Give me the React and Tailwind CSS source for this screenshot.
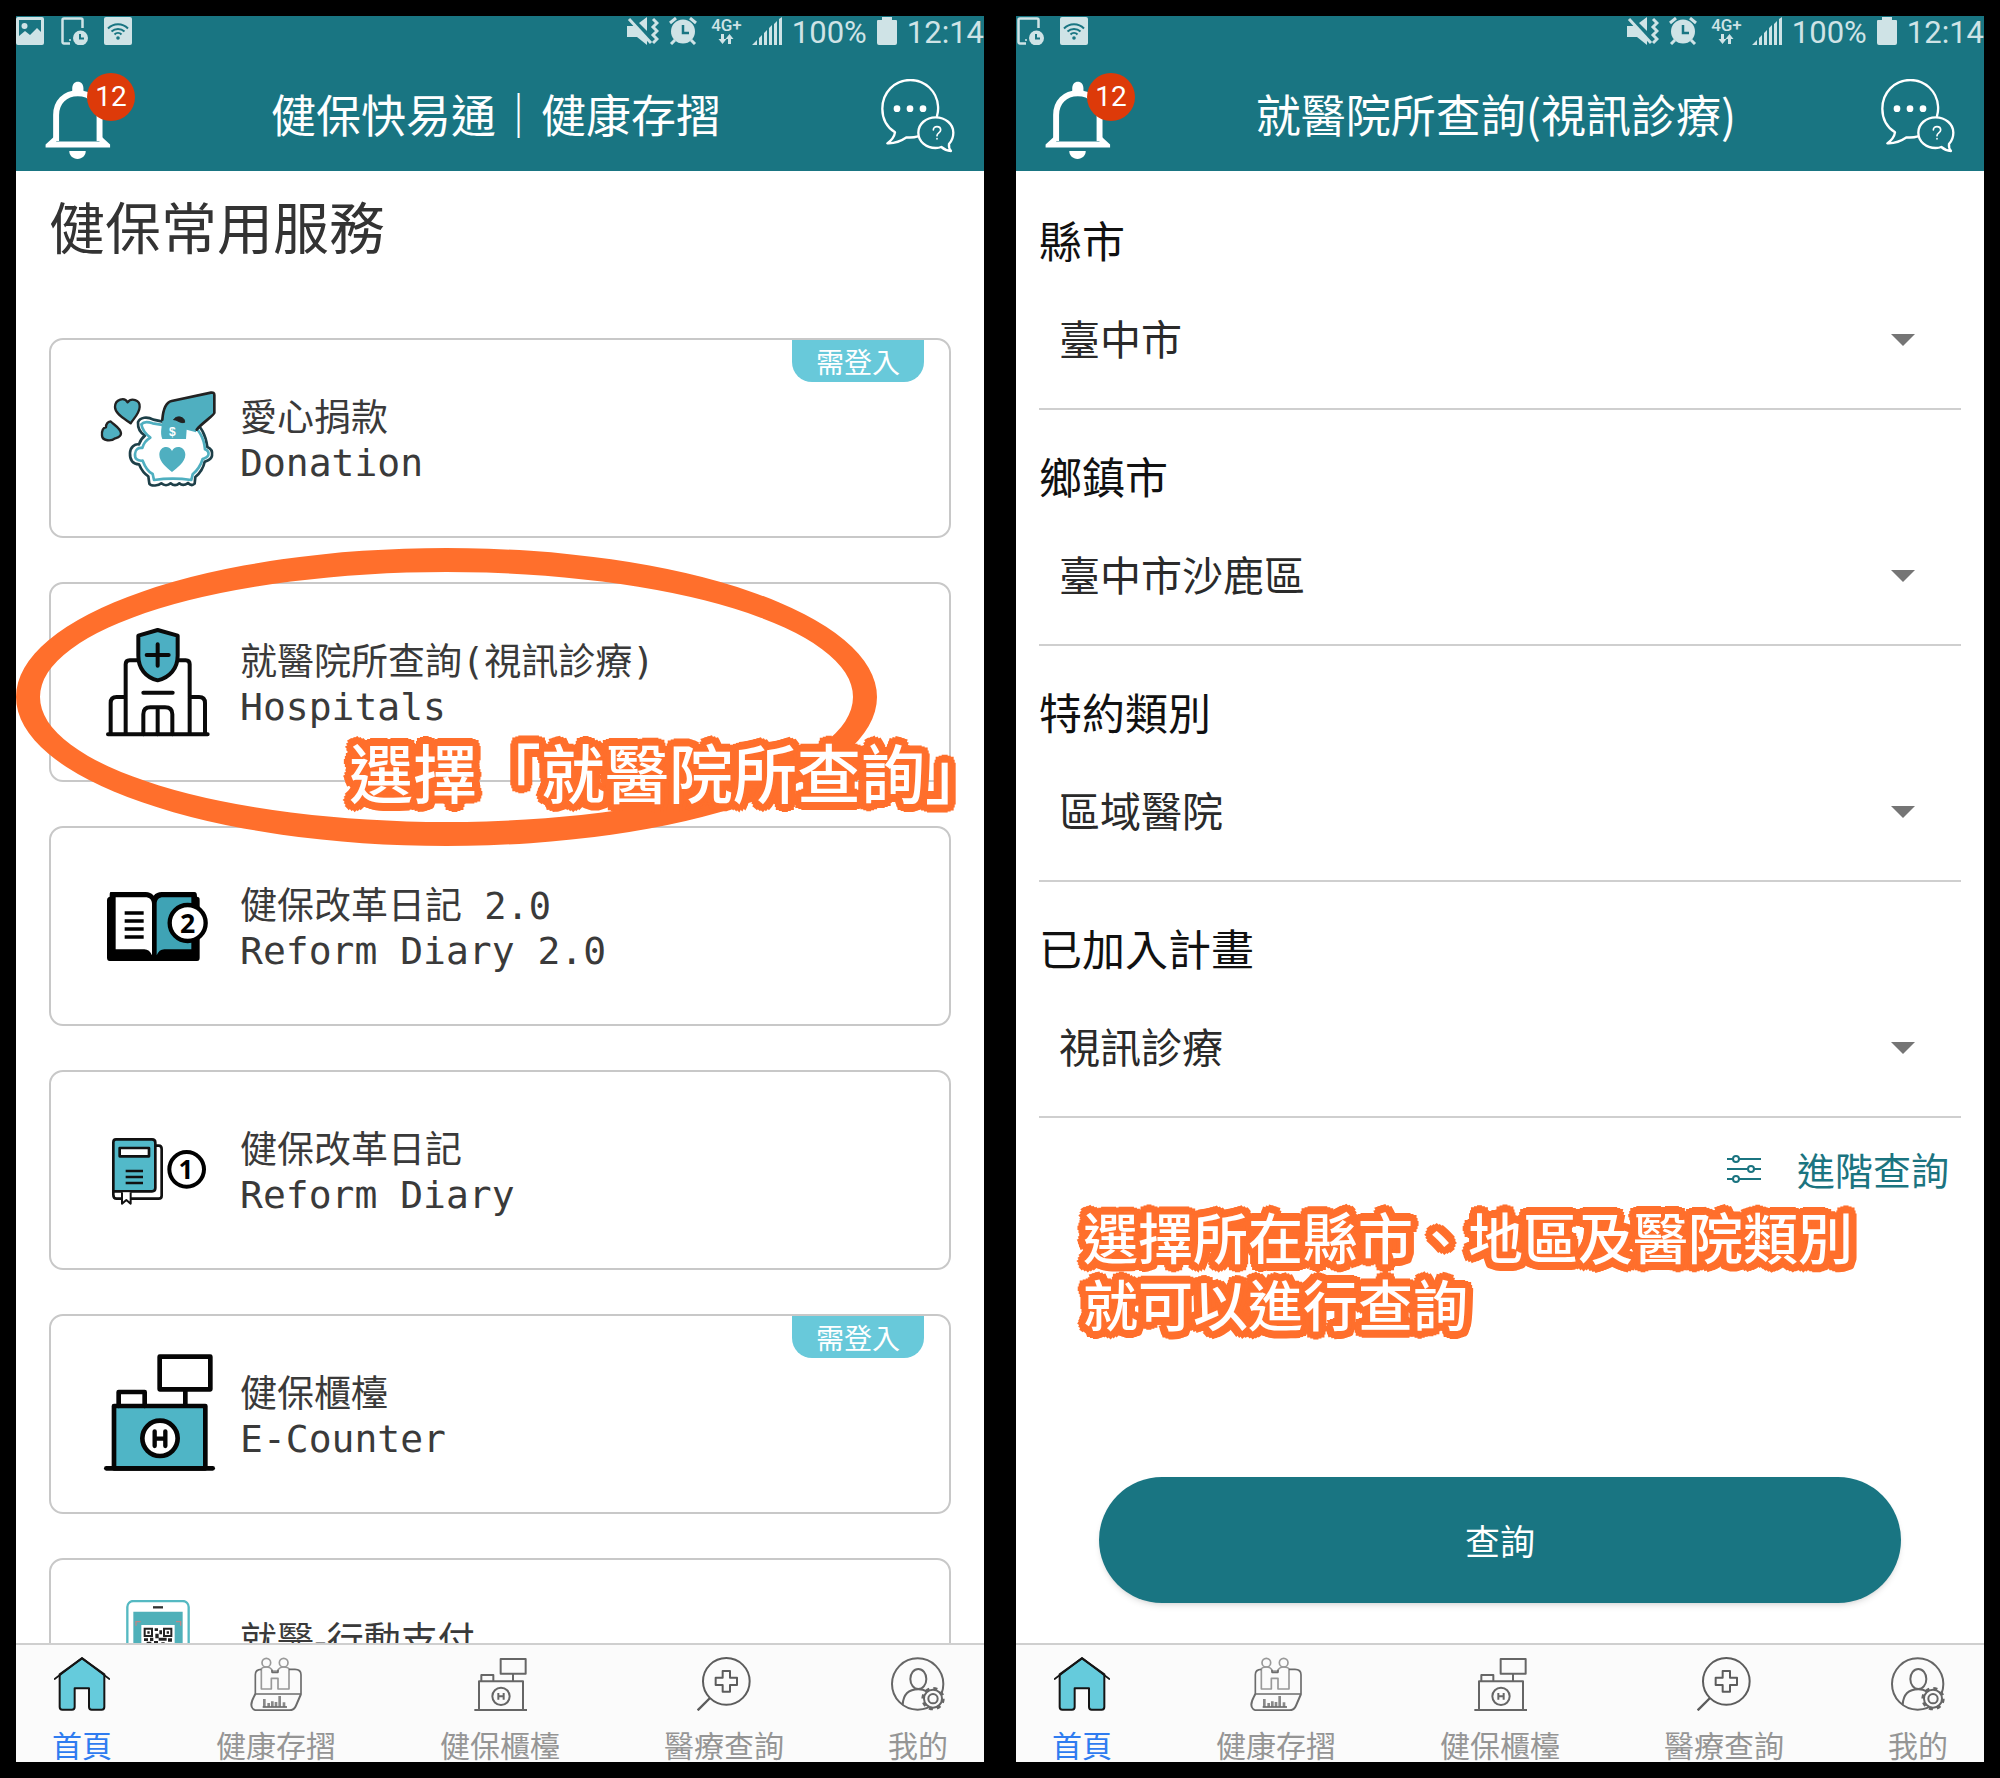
import React from 'react';

const CJK = "font-['Noto_Sans_CJK_TC',sans-serif]";

/* ---------- status bar icons ---------- */

const ImageIcon = () => (
  <svg viewBox="0 0 28 28" className="size-7" fill="#cfe3e6">
    <path fillRule="evenodd" d="M2 0h24a2 2 0 0 1 2 2v24a2 2 0 0 1-2 2H2a2 2 0 0 1-2-2V2a2 2 0 0 1 2-2Zm1 3v16l6-5 5 4 7-7 4 4V3H3Z" />
    <circle cx="8.5" cy="9" r="3" />
  </svg>
);

const PhoneClockIcon = () => (
  <svg viewBox="0 0 28 28" className="size-7" fill="none">
    <path d="M10 26.500H4a1.500 1.500 0 0 1-1.500-1.500V3A1.500 1.500 0 0 1 4 1.500h17A1.500 1.500 0 0 1 22.500 3v8" stroke="#cfe3e6" strokeWidth="2.500" />
    <circle cx="20.500" cy="21" r="7.500" fill="#cfe3e6" />
    <path d="M20 17v4.500h4" stroke="#197582" strokeWidth="2" />
    <circle cx="10" cy="23" r="1" fill="#cfe3e6" />
  </svg>
);

const WifiIcon = () => (
  <svg viewBox="0 0 28 28" className="size-7" fill="none" stroke="#197582" strokeWidth="2">
    <rect width="28" height="28" rx="2" fill="#cfe3e6" stroke="none" />
    <path d="M4 11.500a14 14 0 0 1 20 0M7.500 14.500a9.500 9.500 0 0 1 13 0M10.500 17.500a5 5 0 0 1 7 0" />
    <circle cx="14" cy="21" r="1.800" fill="#197582" stroke="none" />
  </svg>
);

const MuteVibrateIcon = () => (
  <svg viewBox="0 0 32 28" className="h-7 w-8" fill="#cfe3e6">
    <path d="M0 9h7l13 12v7l-10-8H0V9ZM12 6l8-6v14L12 6Z" />
    <path d="M2 2l22 24" stroke="#cfe3e6" strokeWidth="3" />
    <path d="M26 2l4 4-4 4 4 4-4 4 4 4-4 4" fill="none" stroke="#cfe3e6" strokeWidth="3" />
  </svg>
);

const AlarmIcon = () => (
  <svg viewBox="0 0 28 28" className="size-7" fill="none" stroke="#cfe3e6" strokeWidth="3">
    <circle cx="14" cy="14.500" r="12" fill="#cfe3e6" stroke="none" />
    <path d="M1 6l6-5M27 6l-6-5M6 23l-4 4M22 23l4 4" />
    <path d="M14 8v8h6" stroke="#197582" strokeWidth="2.500" />
  </svg>
);

const SignalIcon = () => (
  <svg viewBox="0 0 30 28" className="h-7 w-[30px]" fill="#cfe3e6">
    <path d="M0 28l5-5v5H0ZM7 21l3-3v10H7ZM12 16l3-3v15h-3ZM17 11l3-3v20h-3ZM22 7l3-3v24h-3ZM27 2l3-2v28H27Z" />
  </svg>
);

const BatteryIcon = () => (
  <svg viewBox="0 0 20 28" className="h-7 w-5" fill="#cfe3e6">
    <path d="M5 0h10v3h4a1 1 0 0 1 1 1v22a2 2 0 0 1-2 2H2a2 2 0 0 1-2-2V4a1 1 0 0 1 1-1h4V0Z" />
  </svg>
);

/* ---------- header icons ---------- */

const BellIcon = () => (
  <svg viewBox="107 210 197 237" className="h-[78px] w-[66px]" fill="none">
    <path d="M205 212c-10 0-17 8-17 20v14h34v-14c0-12-7-20-17-20Z" fill="#fff" />
    <path d="M139 392v-79c0-38 26-66 66-66s66 28 66 66v79" stroke="#fff" strokeWidth="18" />
    <path d="M107 412v-9l24-22h13l-5 13h132l-5-13h13l24 22v9H107Z" fill="#fff" />
    <path d="M179 423h50c0 14-11 24-25 24s-25-10-25-24Z" fill="#fff" />
  </svg>
);

const ChatIcon = () => (
  <svg viewBox="785 205 222 222" className="size-[74px]" fill="none" stroke="#fff" strokeWidth="7" strokeLinejoin="round" strokeLinecap="round">
    <path d="M953 316c3-10 4-20 3-30-3-44-39-78-83-78-48 0-84 38-84 86 0 30 15 56 38 71-2 14-12 25-23 33 22 1 42-7 58-18 12 1 24 0 34-3" />
    <path d="M949 320c-29 0-52 20-52 46s23 46 52 46c6 0 12-1 17-3 8 7 17 11 29 12-5-6-7-13-6-21 8-9 13-20 13-34 0-26-24-46-53-46Z" />
    <g fill="#fff" stroke="none">
      <circle cx="833" cy="294" r="10" />
      <circle cx="872" cy="294" r="10" />
      <circle cx="911" cy="294" r="10" />
    </g>
    <path d="M942 358c0-14 22-13 22 0 0 9-11 8-11 17M953 384v1" strokeWidth="5" />
  </svg>
);

/* ---------- service icons ---------- */

const DonationIcon = () => (
  <svg viewBox="60 33 348 348" className="size-[116px] shrink-0" strokeLinejoin="round" strokeLinecap="round">
    <path d="M152 163c-14-11-47-27-47-49 0-24 29-31 38-14 10-14 38-9 36 14-1 20-17 33-27 49Z" fill="#4fafc0" stroke="#222" strokeWidth="7" />
    <path d="M92 157c6 8 30 20 31 36 0 12-12 13-18 15-10 9-38 9-39-8-1-14 3-24 12-25 0-10 6-17 14-18Z" fill="#4fafc0" stroke="#222" strokeWidth="7" />
    <path d="M174 160c6-16 28-18 46-8l28 6h90c24 8 40 42 44 76 10 4 16 14 14 26-2 12-12 14-22 18-4 20-14 34-28 46l-2 20c-6 6-14 4-20-2-8 6-18 8-26 1-8 7-18 7-26 0-8 7-20 7-28 0-8 7-30 10-36 1l-3-22c-14-8-22-22-28-36-18 0-28-12-27-34 1-18 14-28 27-26 4-12 10-20 18-26-16-10-22-24-21-40Z" fill="#fff" stroke="#1d3f48" strokeWidth="8" />
    <path d="M184 166c8-10 20-8 34-3l38 6h76c24 8 40 38 43 72 10 4 12 10 10 17-2 8-10 9-17 12-6 20-16 34-30 46l-4 17c-40-6-72-6-112 0l-4-18c-16-8-24-24-30-40-16 2-24-6-23-20s10-20 22-18c4-16 12-24 24-31-16-12-24-22-27-40Z" fill="none" stroke="#4fafc0" strokeWidth="8" />
    <path d="M247 152c2-26 10-52 28-56l118-25c6-1 10 1 10 7v54c0 6-52 42-55 58l-28-8-2 28H247c-8-20 0-40 0-58Z" fill="#4fafc0" />
    <path d="M247 152c2-26 10-52 28-56l118-25c6-1 10 1 10 7v54c0 6-44 36-53 50" fill="none" stroke="#222" strokeWidth="8" />
    <path d="M282 152c4-14 34-10 32 8-14 4-18-6-32-8Z" fill="#222" stroke="#222" strokeWidth="3" />
    <text x="277" y="202" textAnchor="middle" fontSize="36" fontWeight="700" fill="#fff" fontFamily="Liberation Sans, sans-serif">$</text>
    <path d="M276 309c-14-12-38-30-38-52 0-26 30-31 38-11 8-20 40-15 40 11 0 22-26 40-40 52Z" fill="#4fafc0" />
  </svg>
);

const HospitalIcon = () => (
  <svg viewBox="60 765 348 348" className="size-[116px] shrink-0" fill="none" stroke="#0a0a0a" strokeWidth="12" strokeLinejoin="round" strokeLinecap="round">
    <path d="M84 1096h299M137 1096V886c0-8 4-12 12-12h168c8 0 12 4 12 12v210M92 1096v-94c0-12 6-18 18-18h27M375 1096v-94c0-12-6-18-18-18h-28" />
    <path d="M190 971h88" />
    <path d="M190 1096v-60c0-14 8-21 21-21h44c14 0 22 7 22 21v60M233 1015v81" />
    <path d="M233 783l60 17v60c0 38-24 66-60 74-36-8-58-36-58-74v-60l58-17Z" fill="#4cafc3" />
    <path d="M233 826v64M200 858h66" />
  </svg>
);

const Diary2Icon = () => (
  <svg viewBox="60 27 348 348" className="size-[116px] shrink-0">
    <path d="M92 99h105c10 0 18 4 24 11 6-7 14-11 24-11h98c6 0 8 4 8 14 8 1 8 4 8 12v171c0 6-2 10-8 10H89c-5 0-8-4-8-10V125c0-8 3-11 8-12 0-8 0-14 3-14Z" />
    <path d="M107 115h88c14 0 21 8 21 20v154c-5-12-12-18-23-18h-86V115Z" fill="#fff" />
    <path d="M334 115h-84c-14 0-20 8-20 20v154c5-12 12-18 23-18h81V115Z" fill="#3fa3b5" />
    <path d="M134 162h57M134 186h57M134 210h57M134 234h57" stroke="#000" strokeWidth="10" />
    <circle cx="323" cy="192" r="54" fill="#fff" stroke="#000" strokeWidth="13" />
    <text x="323" y="221" textAnchor="middle" fontSize="80" fontWeight="700" fontFamily="Open Sans, sans-serif">2</text>
  </svg>
);

const DiaryIcon = () => (
  <svg viewBox="60 759 348 348" className="size-[116px] shrink-0" fill="none" stroke="#111" strokeWidth="8" strokeLinejoin="round">
    <path d="M228 860h8c6 0 9 4 9 10v140c0 6-3 9-9 9H110c-8 0-10-6-10-12V850" fill="#fff" />
    <path d="M108 841h108c6 0 10 4 10 10v136c0 6-4 10-10 10H100V850c0-6 3-9 8-9Z" fill="#52b9c9" />
    <path d="M119 867h88v25h-88z" fill="#fff" />
    <path d="M137 936h52M137 954h52M137 972h52" />
    <path d="M126 1000v34l13-11 13 11v-34" fill="#fff" strokeWidth="6" />
    <circle cx="320" cy="931" r="52" fill="#fff" stroke="#000" strokeWidth="12" />
    <text x="318" y="959" textAnchor="middle" fontSize="78" fontWeight="700" fill="#000" stroke="none" fontFamily="Open Sans, sans-serif">1</text>
  </svg>
);

const CounterIcon = () => (
  <svg viewBox="60 111 348 348" className="size-[116px] shrink-0 overflow-visible" fill="none" stroke="#050505" strokeWidth="14" strokeLinejoin="round" strokeLinecap="round">
    <path d="M102 261h274v187H102z" fill="#4fb5c6" />
    <path d="M79 448h319" />
    <path d="M116 261v-42h78v42M316 213v45" />
    <path d="M239 113h152v98H239z" fill="#fff" />
    <circle cx="240" cy="358" r="53" fill="#fff" />
    <path d="M224 337v44M256 337v44M224 359h32" strokeWidth="13" />
  </svg>
);

const MobilePayIcon = () => (
  <svg viewBox="60 843 348 348" className="size-[116px] shrink-0" fill="none">
    <rect x="142" y="846" width="184" height="330" rx="18" fill="#fff" stroke="#55b9c2" strokeWidth="7" />
    <path d="M160 878h148v250H160z" fill="#4fb0b9" />
    <path d="M219 865h30" stroke="#333" strokeWidth="7" />
    <path d="M168 920v-12h14M302 920v-12h-14" stroke="#b88" strokeWidth="4" />
    <path d="M184 918h100v104H184z" fill="#fff" />
    <path d="M194 929h22v22h-22zM252 929h22v22h-22zM194 986h22v22h-22z" stroke="#222" strokeWidth="6" />
    <path d="M202 937h7v7h-7zM260 937h7v7h-7zM224 928h10v8h-10zM238 934h8v12h-8zM226 944h10v14h-10zM192 958h12v8h-12zM210 956h10v10h-10zM236 956h24v9h-24zM264 958h12v10h-12zM200 968h14v8h-14zM222 966h12v20h-12zM244 970h10v14h-10zM258 972h18v8h-18z" fill="#222" />
  </svg>
);

/* ---------- tab bar icons ---------- */

const HomeIcon = () => (
  <svg viewBox="161 80 168 162" className="h-[54px] w-14" stroke="#151515" strokeWidth="6" strokeLinejoin="round" strokeLinecap="round" fill="#65cbdc">
    <path d="M178 132v98c0 5 3 8 8 8h29c5 0 8-3 8-8v-56h43v56c0 5 3 8 8 8h30c5 0 8-3 8-8v-98l-67-48-67 48Z" />
    <path d="M163 146l82-63 82 63" fill="none" strokeWidth="5" />
  </svg>
);

const PassbookIcon = () => (
  <svg viewBox="748 80 162 162" className="size-[54px]" fill="none" stroke="#6c6c6c" strokeWidth="5" strokeLinejoin="round">
    <circle cx="800" cy="97" r="13" stroke="#999" />
    <circle cx="852" cy="97" r="13" stroke="#999" />
    <path d="M785 118v58h30v-32h20v32h33v-58c0-4-4-8-16-8s-16 6-18 12h-16c-2-6-6-12-18-12-10 0-15 4-15 8Z" stroke="#999" />
    <path d="M785 117c-12 0-18 6-18 16v58h137v-58c0-10-6-16-18-16h-18" />
    <path d="M767 191c-6 12-12 20-12 32 0 10 8 17 18 17h96c10 0 16-4 20-14l15-35" strokeWidth="6" />
    <path d="M817 118v8h18v-8" />
    <path d="M794 230v-24M807 230v-12M818 230v-17M829 230v-15M840 230v-33M853 230v-14" strokeWidth="8" stroke="#888" />
    <path d="M789 230h73" />
  </svg>
);

const CounterTabIcon = () => (
  <svg viewBox="1416 80 162 162" className="size-[54px]" fill="none" stroke="#666" strokeWidth="6" strokeLinejoin="round">
    <path d="M1420 239h158M1434 239v-86h132v86M1441 153v-19h36v19M1536 130v23M1499 86h75v44h-75z" />
    <circle cx="1500" cy="198" r="26" />
    <path d="M1492 188v20M1508 188v20M1492 198h16" />
  </svg>
);

const SearchTabIcon = () => (
  <svg viewBox="590 80 162 162" className="size-[54px]" fill="none" stroke="#5c5c5c" strokeWidth="6" strokeLinejoin="round">
    <circle cx="678" cy="153" r="70" />
    <path d="M629 203l-37 37" strokeWidth="7" />
    <path d="M667 122h22v20h21v22h-21v20h-22v-20h-21v-22h21z" />
  </svg>
);

const ProfileTabIcon = () => (
  <svg viewBox="1172 80 162 162" className="size-[54px]" fill="none" stroke="#666" strokeWidth="6">
    <circle cx="1252" cy="161" r="77" />
    <ellipse cx="1254" cy="146" rx="24" ry="30" />
    <path d="M1207 223c2-32 20-46 47-46 10 0 18 2 25 6" />
    <circle cx="1298" cy="205" r="27" fill="#fbfbfb" />
    <circle cx="1298" cy="205" r="31" strokeWidth="8" strokeDasharray="12.200 12.150" />
    <circle cx="1298" cy="205" r="14" />
  </svg>
);

/* ---------- shared parts ---------- */

const StatusBar = ({ children }) => (
  <div className="flex h-8 items-start justify-between">
    <div className="flex gap-4 pt-px">{children}</div>
    <div className="flex items-start gap-2.5 pt-px font-['Roboto',sans-serif] text-[31px] leading-8 text-[#cfe3e6]">
      <MuteVibrateIcon />
      <AlarmIcon />
      <div className="ml-1 flex flex-col items-center text-[17px] leading-4 font-medium">
        4G+
        <svg viewBox="0 0 16 10" className="h-3 w-4" fill="#cfe3e6">
          <path d="M3 0h3v5h2.500L4.500 10 .5 5H3ZM10 10h3V5h2.500L11.500 0l-4 5H10Z" />
        </svg>
      </div>
      <SignalIcon />
      <span>100%</span>
      <BatteryIcon />
      <span>12:14</span>
    </div>
  </div>
);

const Header = ({ title, statusIcons }) => (
  <header className="shrink-0 bg-[#197582] text-white">
    <StatusBar>{statusIcons}</StatusBar>
    <div className="flex h-[123px] items-center px-[29px] pt-2">
      <button type="button" aria-label="notifications" className="relative mt-3">
        <BellIcon />
        <span className="absolute -top-2 -right-6 flex size-12 items-center justify-center rounded-full bg-[#dd3a09] font-['Roboto',sans-serif] text-[28px] leading-8">
          12
        </span>
      </button>
      <h1 className="flex-1 text-center text-[45px] leading-[60px]">{title}</h1>
      <button type="button" aria-label="support" className="mt-1">
        <ChatIcon />
      </button>
    </div>
  </header>
);

const tabs = [
  { label: '首頁', icon: HomeIcon, active: true },
  { label: '健康存摺', icon: PassbookIcon },
  { label: '健保櫃檯', icon: CounterTabIcon },
  { label: '醫療查詢', icon: SearchTabIcon },
  { label: '我的', icon: ProfileTabIcon },
];

const TabBar = () => (
  <nav className="flex shrink-0 justify-between border-t-2 border-[#cfcfcf] bg-[#fbfbfb] px-9 pt-3">
    {tabs.map(({ label, icon: Icon, active }) => (
      <a
        key={label}
        href="#"
        className={`flex flex-col items-center gap-4 text-[30px] leading-[35px] ${active ? 'text-[#2f7cf0]' : 'text-[#959595]'}`}
      >
        <Icon />
        {label}
      </a>
    ))}
  </nav>
);

const Phone = ({ title, statusIcons, children }) => (
  <section className="flex min-w-0 flex-1 flex-col bg-white">
    <Header title={title} statusIcons={statusIcons} />
    <main className="min-h-0 flex-1 overflow-hidden">{children}</main>
    <TabBar />
  </section>
);

// white lettering with a thick, round-cornered orange outline (two rings of shadows)
const Callout = ({ className, children }) => (
  <p
    className={`font-medium whitespace-nowrap text-white [text-shadow:4px_0_#ff6f2c,-4px_0_#ff6f2c,0_4px_#ff6f2c,0_-4px_#ff6f2c,3px_3px_#ff6f2c,-3px_3px_#ff6f2c,3px_-3px_#ff6f2c,-3px_-3px_#ff6f2c,8px_0_#ff6f2c,-8px_0_#ff6f2c,0_8px_#ff6f2c,0_-8px_#ff6f2c,7px_3px_#ff6f2c,-7px_3px_#ff6f2c,7px_-3px_#ff6f2c,-7px_-3px_#ff6f2c,6px_6px_#ff6f2c,-6px_6px_#ff6f2c,6px_-6px_#ff6f2c,-6px_-6px_#ff6f2c,3px_7px_#ff6f2c,-3px_7px_#ff6f2c,3px_-7px_#ff6f2c,-3px_-7px_#ff6f2c] ${className}`}
  >
    {children}
  </p>
);

/* ---------- home screen ---------- */

const services = [
  { zh: '愛心捐款', en: 'Donation', icon: DonationIcon, login: true },
  { zh: '就醫院所查詢(視訊診療)', en: 'Hospitals', icon: HospitalIcon, marked: true },
  { zh: '健保改革日記 2.0', en: 'Reform Diary 2.0', icon: Diary2Icon },
  { zh: '健保改革日記', en: 'Reform Diary', icon: DiaryIcon },
  { zh: '健保櫃檯', en: 'E-Counter', icon: CounterIcon, login: true },
  { zh: '就醫-行動支付', icon: MobilePayIcon, plain: true },
];

const ServiceCard = ({ zh, en, icon: Icon, login, marked, plain }) => (
  <li className="relative h-[200px] rounded-[14px] border-2 border-[#c8c8c8]">
    <a href="#" className="flex h-full items-center gap-6 pl-[49px] font-['DejaVu_Sans_Mono','Noto_Sans_CJK_TC',monospace] text-[#3a3a3a]">
      <Icon />
      <span className="flex h-24 flex-col pt-1.5">
        <span className={`text-[37px] leading-[45px] ${plain ? "font-['Noto_Sans_CJK_TC',sans-serif]" : ''}`}>{zh}</span>
        {en && <span className="text-[38px] leading-[45px]">{en}</span>}
      </span>
    </a>
    {login && (
      <span className="absolute top-0 right-[25px] rounded-b-[20px] bg-[#68c9da] px-6 text-[28px] leading-[42px] text-white">
        需登入
      </span>
    )}
    {marked && (
      <div className="pointer-events-none absolute -top-9 -left-[35px] z-10 h-[298px] w-[861px] rounded-[50%] border-[24px] border-[#ff6f2c]" />
    )}
    {marked && (
      <Callout className="absolute top-[154px] left-[298px] z-10 text-[64px] leading-[64px]">選擇「就醫院所查詢」</Callout>
    )}
  </li>
);

const HomeScreen = () => (
  <Phone
    title="健保快易通｜健康存摺"
    statusIcons={
      <>
        <ImageIcon />
        <PhoneClockIcon />
        <WifiIcon />
      </>
    }
  >
    <div className="px-[33px] pt-3">
      <h2 className="text-[56px] leading-[84px] text-[#333]">健保常用服務</h2>
      <ul className="mt-[71px] flex flex-col gap-11">
        {services.map((s) => (
          <ServiceCard key={s.zh} {...s} />
        ))}
      </ul>
    </div>
  </Phone>
);

/* ---------- search screen ---------- */

const fields = [
  { id: 'city', label: '縣市', value: '臺中市' },
  { id: 'district', label: '鄉鎮市', value: '臺中市沙鹿區' },
  { id: 'type', label: '特約類別', value: '區域醫院' },
  { id: 'plan', label: '已加入計畫', value: '視訊診療' },
];

const SelectField = ({ id, label, value }) => (
  <div className="pt-[38px]">
    <label htmlFor={id} className="block text-[43px] leading-[54px] text-[#111]">
      {label}
    </label>
    <div className="relative mt-1.5">
      <select id={id} className="h-[138px] w-full appearance-none border-b-2 border-[#cfcfcf] pb-1 pl-5 text-[41px] text-[#2a2a2a]">
        <option>{value}</option>
      </select>
      <svg viewBox="0 0 24 12" className="pointer-events-none absolute top-[62px] right-[46px] h-3 w-6" fill="#757575">
        <path d="M0 0h24L12 12Z" />
      </svg>
    </div>
  </div>
);

const SearchScreen = () => (
  <Phone
    title="就醫院所查詢(視訊診療)"
    statusIcons={
      <>
        <PhoneClockIcon />
        <WifiIcon />
      </>
    }
  >
    <form className="px-[23px] pt-[3px]" onSubmit={(e) => e.preventDefault()}>
      {fields.map((f) => (
        <SelectField key={f.id} {...f} />
      ))}
      <a href="#" className="mt-6 flex items-center justify-end gap-9 pr-3 text-[38px] leading-[54px] text-[#1b7480]">
        <svg viewBox="0 0 34 28" className="h-7 w-[34px]" fill="none" stroke="#1b7480" strokeWidth="2">
          <path d="M0 4h6M12 4h22M0 14h21M27 14h7M0 24h6M12 24h22" />
          <circle cx="9" cy="4" r="3" />
          <circle cx="24" cy="14" r="3" />
          <circle cx="9" cy="24" r="3" />
        </svg>
        進階查詢
      </a>
      <Callout className="mt-1.5 ml-11 text-[55px] leading-[67px]">
        選擇所在縣市、地區及醫院類別
        <br />
        就可以進行查詢
      </Callout>
      <div className="px-[60px] pt-[141px]">
        <button type="submit" className="h-[126px] w-full rounded-full bg-[#197582] text-[35px] text-white shadow-md">
          查詢
        </button>
      </div>
    </form>
  </Phone>
);

export default function App() {
  return (
    <div className={`flex h-screen gap-8 bg-black p-4 ${CJK}`}>
      <HomeScreen />
      <SearchScreen />
    </div>
  );
}
